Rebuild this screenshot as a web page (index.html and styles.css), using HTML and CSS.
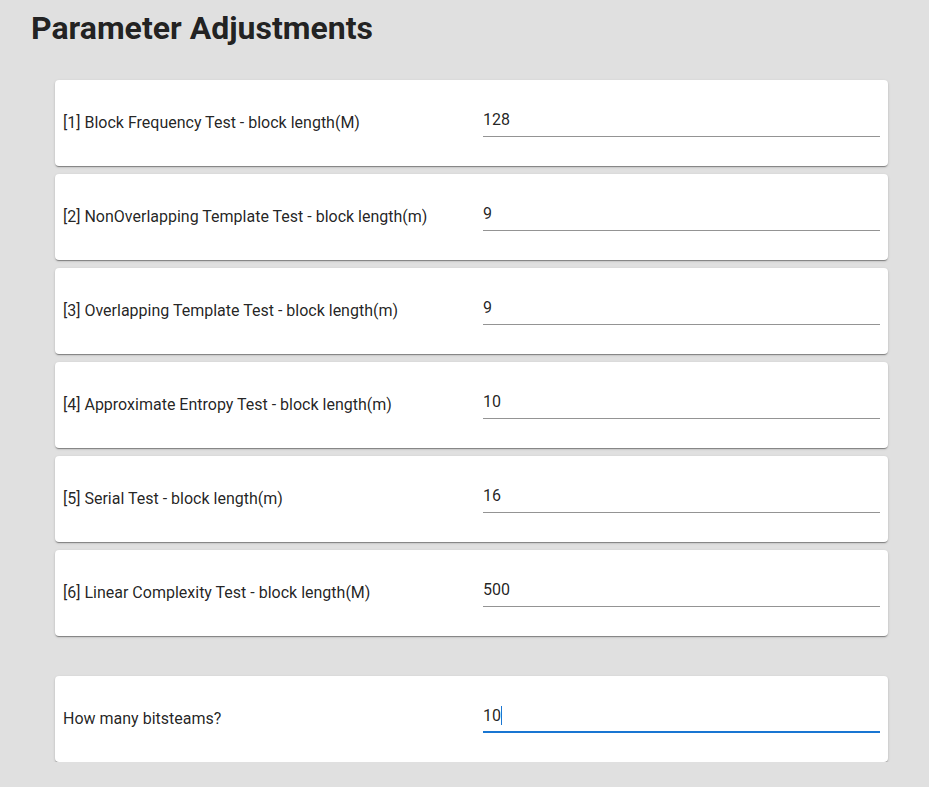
FILE: index.html
```html
<!DOCTYPE html>
<html>
<head>
<meta charset="utf-8">
<link rel="stylesheet" href="styles.css">
</head>
<body>
<h1 class="title">Parameter Adjustments</h1>
<div class="list">
  <div class="card">
    <div class="label">[1] Block Frequency Test - block length(M)</div>
    <div class="field"><input class="input" type="text" value="128"></div>
  </div>
  <div class="card">
    <div class="label">[2] NonOverlapping Template Test - block length(m)</div>
    <div class="field"><input class="input" type="text" value="9"></div>
  </div>
  <div class="card">
    <div class="label">[3] Overlapping Template Test - block length(m)</div>
    <div class="field"><input class="input" type="text" value="9"></div>
  </div>
  <div class="card">
    <div class="label">[4] Approximate Entropy Test - block length(m)</div>
    <div class="field"><input class="input" type="text" value="10"></div>
  </div>
  <div class="card">
    <div class="label">[5] Serial Test - block length(m)</div>
    <div class="field"><input class="input" type="text" value="16"></div>
  </div>
  <div class="card">
    <div class="label">[6] Linear Complexity Test - block length(M)</div>
    <div class="field"><input class="input" type="text" value="500"></div>
  </div>
  <div class="card card-spaced">
    <div class="label">How many bitsteams?</div>
    <div class="field"><div class="input input-focused">10<span class="caret"></span></div></div>
  </div>
</div>
</body>
</html>
```

FILE: styles.css
```css
html, body {
  margin: 0;
  padding: 0;
  background: #e0e0e0;
  font-family: Roboto, "Liberation Sans", Arial, sans-serif;
  color: rgba(0, 0, 0, 0.87);
}

.title {
  margin: 7px 0 0 31px;
  font-size: 32px;
  line-height: 42px;
  font-weight: 700;
  color: rgba(0, 0, 0, 0.87);
}

.list {
  margin: 31px 0 0 55px;
  width: 833px;
  display: flex;
  flex-direction: column;
  gap: 8px;
}

.card {
  background: #fff;
  border-radius: 4px;
  height: 86px;
  box-sizing: border-box;
  padding: 0 8px;
  display: grid;
  grid-template-columns: 420px 1fr;
  align-items: center;
  box-shadow: 0 2px 1px -1px rgba(0,0,0,0.25), 0 1px 1px 0 rgba(0,0,0,0.16), 0 1px 3px 0 rgba(0,0,0,0.14);
}

.card-spaced {
  margin-top: 32px;
}

.label {
  font-size: 16px;
  line-height: 19px;
  margin-bottom: 1px;
}

.field {
  margin-bottom: 6px;
}

.input {
  display: block;
  width: 100%;
  box-sizing: border-box;
  height: 34px;
  padding: 7px 0;
  margin: 0;
  border: none;
  border-bottom: 1px solid rgba(0, 0, 0, 0.42);
  outline: none;
  background: transparent;
  font-family: Roboto, "Liberation Sans", Arial, sans-serif;
  font-size: 16px;
  line-height: 19px;
  color: rgba(0, 0, 0, 0.87);
}

.input-focused {
  border-bottom: 2px solid #1976d2;
  padding-bottom: 6px;
}

.caret {
  display: inline-block;
  width: 1px;
  height: 19px;
  background: #1976d2;
  vertical-align: top;
}
```
